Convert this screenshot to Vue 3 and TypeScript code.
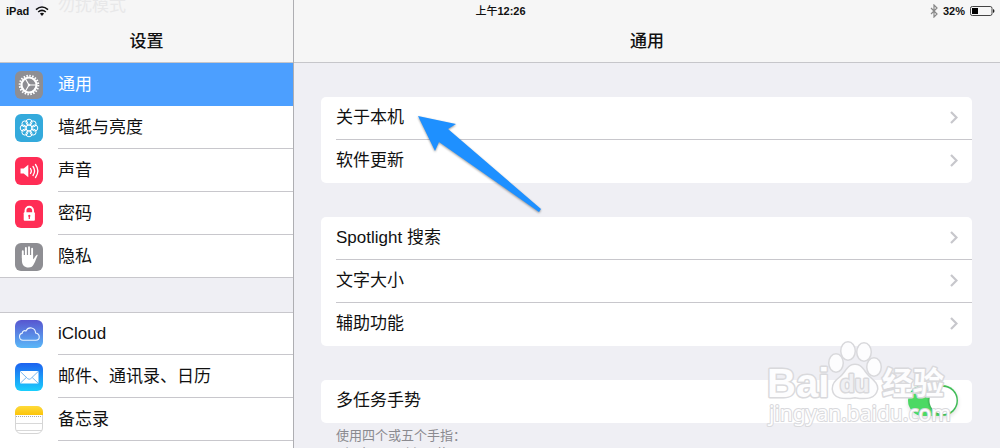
<script setup lang="ts">
import { ref } from 'vue'

interface NavItem {
  id: string
  label: string
}

const navGroups: NavItem[][] = [
  [
    { id: 'general', label: '通用' },
    { id: 'wallpaper', label: '墙纸与亮度' },
    { id: 'sound', label: '声音' },
    { id: 'passcode', label: '密码' },
    { id: 'privacy', label: '隐私' },
  ],
  [
    { id: 'icloud', label: 'iCloud' },
    { id: 'mail', label: '邮件、通讯录、日历' },
    { id: 'notes', label: '备忘录' },
  ],
]

const cards: string[][] = [
  ['关于本机', '软件更新'],
  ['Spotlight 搜索', '文字大小', '辅助功能'],
]

const selected = ref('general')
const gestures = ref(true)
const petals = Array.from({ length: 8 }, (_, i) => {
  const a = (i * Math.PI) / 4
  return { x: 14 + 5.8 * Math.cos(a), y: 14 + 5.8 * Math.sin(a) }
})
</script>

<template>
  <div class="app">
    <div class="status">
      <div class="status-side">
        <span>iPad</span>
        <svg class="wifi" viewBox="0 0 14 10" aria-hidden="true">
          <path d="M1 3.6Q7-1.6 13 3.6" /><path d="M3.2 6Q7 2.8 10.8 6" />
          <path class="solid" d="M4.9 7.6Q7 6 9.1 7.6L7 10Z" />
        </svg>
      </div>
      <time class="clock"><span class="meridiem">上午</span>12:26</time>
      <div class="status-side end">
        <svg class="bluetooth" viewBox="0 0 8 14" aria-hidden="true">
          <path d="M1 4l6 6-3 3V1l3 3-6 6" />
        </svg>
        <span>32%</span>
        <svg class="battery" viewBox="0 0 25 10" aria-hidden="true">
          <rect x="0.5" y="0.5" width="21.5" height="9" rx="1.8" fill="none" stroke="#444" />
          <rect x="2" y="2" width="6" height="6" fill="#000" />
          <path d="M23 3q1.5 .3 1.5 2T23 7z" fill="#222" />
        </svg>
      </div>
    </div>

    <aside class="sidebar">
      <header class="bar">
        <div class="ghost" aria-hidden="true"><i></i><span>勿扰模式</span></div>
        <h1>设置</h1>
      </header>
      <nav>
        <ul v-for="(group, g) in navGroups" :key="g" class="nav-group">
          <li v-for="item in group" :key="item.id">
            <button
              type="button"
              class="nav-row"
              :class="{ active: selected === item.id }"
              @click="selected = item.id"
            >
              <svg class="icon" viewBox="0 0 28 28" aria-hidden="true">
                <defs>
                  <linearGradient id="cloudFill" x1="0" y1="0" x2="0" y2="1">
                    <stop offset="0" stop-color="#5856d0" /><stop offset="1" stop-color="#5ab8f8" />
                  </linearGradient>
                  <linearGradient id="mailFill" x1="0" y1="0" x2="0" y2="1">
                    <stop offset="0" stop-color="#1d62f0" /><stop offset="1" stop-color="#1acffd" />
                  </linearGradient>
                  <linearGradient id="noteFill" x1="0" y1="0" x2="0" y2="1">
                    <stop offset="0" stop-color="#ffdb3a" /><stop offset="1" stop-color="#fcc40a" />
                  </linearGradient>
                </defs>
                <g v-if="item.id === 'general'" fill="none" stroke="#fff">
                  <rect width="28" height="28" rx="6" fill="#8e8e93" stroke="none" />
                  <circle cx="14" cy="14" r="9.3" stroke-width="2" stroke-dasharray="1.5 1.422" />
                  <circle cx="14" cy="14" r="7.5" stroke-width="2.2" />
                  <path d="M14 14h7M14 14l-3.5-6M14 14l-3.5 6" stroke-width="1.2" />
                  <circle cx="14" cy="14" r="1.3" fill="#fff" stroke="none" />
                </g>
                <g v-else-if="item.id === 'wallpaper'" fill="none" stroke="#fff" stroke-width="1">
                  <rect width="28" height="28" rx="6" fill="#34aadc" stroke="none" />
                  <circle v-for="(p, i) in petals" :key="i" :cx="p.x" :cy="p.y" r="3" />
                  <circle cx="14" cy="14" r="3" />
                </g>
                <g v-else-if="item.id === 'sound'" fill="none" stroke="#fff" stroke-linecap="round">
                  <rect width="28" height="28" rx="6" fill="#ff2d55" stroke="none" />
                  <path d="M5.5 11.5h3.2l4.6-3.7v12.4l-4.6-3.7H5.5z" fill="#fff" stroke="none" />
                  <path d="M15.500 11.5q1.7 2.5 0 5M18 9.5q3.2 4.5 0 9M20.5 7.5q4.7 6.5 0 13" stroke-width="1.3" />
                </g>
                <g v-else-if="item.id === 'passcode'">
                  <rect width="28" height="28" rx="6" fill="#ff2d55" />
                  <path d="M10.5 13V10.5a3.8 3.8 0 0 1 7.6 0V13" fill="none" stroke="#fff" stroke-width="1.9" />
                  <rect x="8.7" y="12.2" width="11.2" height="8.5" rx="1" fill="#fff" />
                  <path d="M14.3 14.7a1.2 1.2 0 0 1 .6 2.2v2h-1.2v-2a1.2 1.2 0 0 1 .6-2.2z" fill="#ff2d55" />
                </g>
                <g v-else-if="item.id === 'privacy'">
                  <rect width="28" height="28" rx="6" fill="#8e8e93" />
                  <path d="M7.8 15V8.3M10.9 13V5M14 13V4.2M17.1 14V5.8" fill="none" stroke="#fff" stroke-width="1.9" stroke-linecap="round" />
                  <path d="M6.9 12h11.2v4.2c1.3-.8 2-3.5 3.5-4.3.7-.3 1.300 0 1 .6-1.3 2.4-2 5.5-3.6 8.3-1.3 2.7-2.7 3.8-5.5 3.8-4 0-6.600-2.6-6.600-7z" fill="#fff" />
                </g>
                <g v-else-if="item.id === 'icloud'">
                  <rect width="28" height="28" rx="6" fill="url(#cloudFill)" />
                  <path d="M8 20.200a3.600 3.600 0 0 1-.7-7.100c0-2 2.100-3 3.600-2.100 2.400-5 9.500-3.600 9.700 2 5 1 4.600 7.200.3 7.200z" fill="none" stroke="#e9f4ff" stroke-width="1.1" />
                </g>
                <g v-else-if="item.id === 'mail'">
                  <rect width="28" height="28" rx="6" fill="url(#mailFill)" />
                  <rect x="5" y="8" width="18.5" height="12.5" rx="1" fill="#fff" />
                  <path d="M5.3 8.5l7.4 7.2q1.5 1.2 3 0l7.5-7.2M5.3 20.2l6-5.7M23.2 20.2l-6-5.7" fill="none" stroke="#78b8f0" stroke-width="1" />
                </g>
                <g v-else>
                  <rect x=".5" y=".5" width="27" height="27" rx="5.5" fill="#fff" stroke="#d5d5d5" />
                  <path d="M0 9V6a6 6 0 0 1 6-6h16a6 6 0 0 1 6 6v3z" fill="url(#noteFill)" />
                  <path d="M1 10.500h26" stroke="#aaa" stroke-width="1" stroke-dasharray="1 1" />
                  <path d="M1 17.500h26M1 24.500h26" stroke="#d8d8d8" />
                </g>
              </svg>
              <span class="nav-label">{{ item.label }}</span>
            </button>
          </li>
        </ul>
      </nav>
    </aside>

    <main class="detail">
      <header class="bar"><h2>通用</h2></header>
      <div class="content">
        <ul v-for="(card, c) in cards" :key="c" class="card">
          <li v-for="label in card" :key="label">
            <button type="button" class="row">
              <span>{{ label }}</span>
              <svg class="chevron" viewBox="0 0 8 13" aria-hidden="true"><path d="M1 1l5.500 5.500L1 12" /></svg>
            </button>
          </li>
        </ul>
        <section>
          <div class="card">
            <label class="row" for="gestures">
              <span>多任务手势</span>
              <input id="gestures" v-model="gestures" class="switch" type="checkbox" role="switch" />
            </label>
          </div>
          <p class="note">使用四个或五个手指：<br />• 捏合以回到主屏幕</p>
        </section>
      </div>
    </main>

    <svg class="arrow" viewBox="0 0 130 104" aria-hidden="true">
      <path d="M4 4L42 12L34 17L127 97L125 100L25 30L21 39Z" />
    </svg>

    <svg class="watermark" viewBox="0 0 190 96" aria-hidden="true">
      <g class="mark">
        <text class="latin" x="4" y="54" font-size="40">Bai</text>
        <ellipse cx="73" cy="20" rx="6.5" ry="8.5" />
        <ellipse cx="85" cy="8" rx="6.500" ry="8.500" />
        <ellipse cx="101" cy="9" rx="6.5" ry="8.5" />
        <ellipse cx="111" cy="24" rx="6.5" ry="8.5" />
        <path d="M92 22c-7 0-8 6-13 11-6 5-9 7-9 13 1 9 10 10 22 8 12 2 20 1 22-8 0-6-4-8-9-13-5-5-6-11-13-11z" />
        <text class="latin hollow" x="77" y="49" font-size="24">du</text>
        <text class="han" x="119" y="51" font-size="31">经验</text>
        <text class="url" x="6" y="78" font-size="21">jingyan.baidu.com</text>
      </g>
    </svg>
  </div>
</template>

<style>
body {
  margin: 0;
}
</style>

<style scoped>
.app {
  position: relative;
  display: flex;
  height: 100vh;
  overflow: hidden;
  background: #efeff4;
  color: #111;
  font: 17px/20px "Liberation Sans", "Noto Sans CJK SC", sans-serif;
}
ul {
  margin: 0;
  padding: 0;
  list-style: none;
}
button {
  border: 0;
  background: none;
  color: inherit;
  font: inherit;
  text-align: left;
}
.status {
  position: absolute;
  z-index: 2;
  top: 0;
  left: 0;
  right: 0;
  display: flex;
  align-items: center;
  height: 21px;
  padding: 0 5px 0 6px;
  font-size: 11px;
  font-weight: bold;
  line-height: 16px;
}
.meridiem {
  font-weight: 500;
}
.status-side {
  display: flex;
  flex: 1;
  align-items: center;
  gap: 6px;
}
.end {
  justify-content: flex-end;
  gap: 5px;
}
.wifi {
  width: 14px;
  height: 10px;
  fill: none;
  stroke: #111;
  stroke-width: 1.6;
}
.wifi .solid {
  fill: #111;
  stroke: none;
}
.bluetooth {
  width: 8px;
  height: 14px;
  fill: none;
  stroke: #888;
  stroke-width: 1.2;
}
.battery {
  width: 25px;
  height: 10px;
}
.sidebar {
  flex: none;
  width: 293px;
  border-right: 1px solid #aeaeb2;
}
.detail {
  flex: 1;
  min-width: 0;
}
.bar {
  position: relative;
  box-sizing: border-box;
  height: 63px;
  padding-top: 32px;
  overflow: hidden;
  border-bottom: 1px solid #c6c6ca;
  background: #f6f6f6;
  text-align: center;
}
h1,
h2 {
  margin: 0;
  font-size: 17px;
  font-weight: 500;
  line-height: 20px;
}
.ghost {
  position: absolute;
  top: -8px;
  left: 15px;
  display: flex;
  align-items: center;
  gap: 15px;
  color: #e8e8e9;
}
.ghost i {
  width: 28px;
  height: 28px;
  border-radius: 6px;
  background: #f0eff5;
}
.nav-group {
  background: #fff;
}
.nav-group + .nav-group {
  margin-top: 34px;
  box-shadow: inset 0 1px #c8c7cc;
}
.nav-group:last-child {
  padding-bottom: 43px;
}
.nav-row {
  display: flex;
  align-items: center;
  gap: 15px;
  width: 100%;
  height: 43px;
  padding: 0 0 0 15px;
}
.nav-row.active {
  background: #4c9fff;
  color: #fff;
}
.icon {
  flex: none;
  width: 28px;
  height: 28px;
}
.nav-label {
  display: flex;
  flex: 1;
  align-self: stretch;
  align-items: center;
}
.nav-row:not(.active) .nav-label {
  box-shadow: inset 0 -1px #c8c7cc;
}
.nav-group:first-child li:last-child .nav-row {
  box-shadow: inset 0 -1px #c8c7cc;
}
.content {
  display: flex;
  flex-direction: column;
  gap: 34px;
  padding: 34px 28px 0 27px;
}
.card {
  overflow: hidden;
  border-radius: 5px;
  background: #fff;
}
.row {
  display: flex;
  align-items: center;
  justify-content: space-between;
  box-sizing: border-box;
  width: 100%;
  height: 43px;
  padding: 0 14px 2px 15px;
}
.card li:not(:last-child) {
  background: linear-gradient(#c8c7cc, #c8c7cc) 15px 100% / 100% 1px no-repeat;
}
.chevron {
  width: 8px;
  height: 13px;
  fill: none;
  stroke: #c7c7cc;
  stroke-width: 2.2;
}
.switch {
  width: 50px;
  height: 31px;
  margin: 0;
  appearance: none;
  border-radius: 16px;
  background: radial-gradient(circle at 35px 50%, #fff 13px, #3fb656 14px, transparent 16px), #4cd964;
  box-shadow: 0 2px 4px #0002;
}
.switch:not(:checked) {
  background: radial-gradient(circle at 15px 50%, #fff 13px, transparent 14px), #ddd;
}
.note {
  margin: 4px 15px 0;
  color: #8a8a8f;
  font-size: 13px;
  line-height: 18px;
}
.arrow {
  position: absolute;
  top: 112px;
  left: 414px;
  width: 130px;
  height: 104px;
  fill: #1e90ff;
  filter: drop-shadow(0 1px 1px #0006);
  pointer-events: none;
}
.watermark {
  position: absolute;
  right: 47px;
  bottom: 9px;
  width: 190px;
  height: 96px;
  overflow: visible;
  pointer-events: none;
}
.mark {
  fill: #fdfdfe;
  stroke: #d9d9dc;
  stroke-width: 3;
  stroke-linejoin: round;
  paint-order: stroke;
}
.latin {
  font-family: "Liberation Sans", sans-serif;
  font-weight: bold;
}
.hollow {
  fill: #f0f0f3;
}
.han {
  font-family: "Noto Sans CJK SC", sans-serif;
  font-weight: bold;
}
.url {
  font-family: "Noto Sans", sans-serif;
  stroke-width: 2;
}
</style>
